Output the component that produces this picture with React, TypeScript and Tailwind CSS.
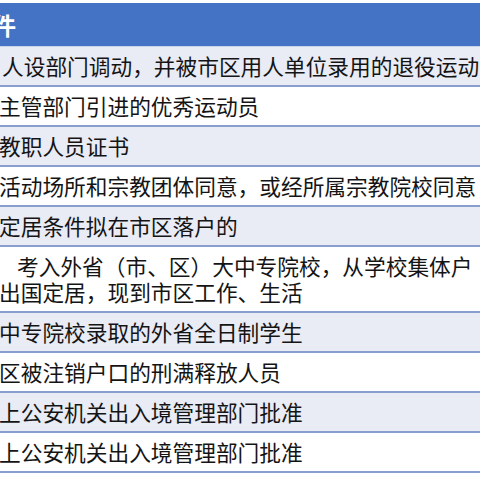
import React from "react";

const rows: { lines: string[]; shade: boolean; offset?: number }[] = [
  { lines: ["人设部门调动，并被市区用人单位录用的退役运动"], shade: true, offset: 2 },
  { lines: ["主管部门引进的优秀运动员"], shade: false },
  { lines: ["教职人员证书"], shade: true },
  { lines: ["活动场所和宗教团体同意，或经所属宗教院校同意"], shade: false },
  { lines: ["定居条件拟在市区落户的"], shade: true },
  { lines: ["考入外省（市、区）大中专院校，从学校集体户", "出国定居，现到市区工作、生活"], shade: false },
  { lines: ["中专院校录取的外省全日制学生"], shade: true },
  { lines: ["区被注销户口的刑满释放人员"], shade: false },
  { lines: ["上公安机关出入境管理部门批准"], shade: true },
  { lines: ["上公安机关出入境管理部门批准"], shade: false },
];

export default function App() {
  return (
    <div
      className="w-[480px] h-[480px] bg-white overflow-hidden pt-[3px] text-[#141414]"
      style={{ fontFamily: '"Noto Sans CJK SC", "Microsoft YaHei", sans-serif' }}
    >
      <div className="h-[44px] bg-[#4472c4] flex items-center border-b border-[#c9d3ec]">
        <span className="ml-[-8px] text-white font-bold text-[24px] leading-none">件</span>
      </div>
      {rows.map((r, i) => (
        <div
          key={i}
          className={`${r.lines.length > 1 ? "h-[66px]" : "h-[40px]"} ${
            r.shade ? "bg-[#e9ebf5]" : "bg-white"
          } border-b-2 border-[#8a9dcf] flex flex-col justify-center whitespace-nowrap text-[21.7px] leading-[26px]`}
        >
          {r.lines.map((l, j) => (
            <div
              key={j}
              className={r.lines.length > 1 && j === 0 ? "pl-[17px]" : r.offset ? "pl-[2px]" : "ml-[-1px]"}
            >
              {l}
            </div>
          ))}
        </div>
      ))}
    </div>
  );
}
